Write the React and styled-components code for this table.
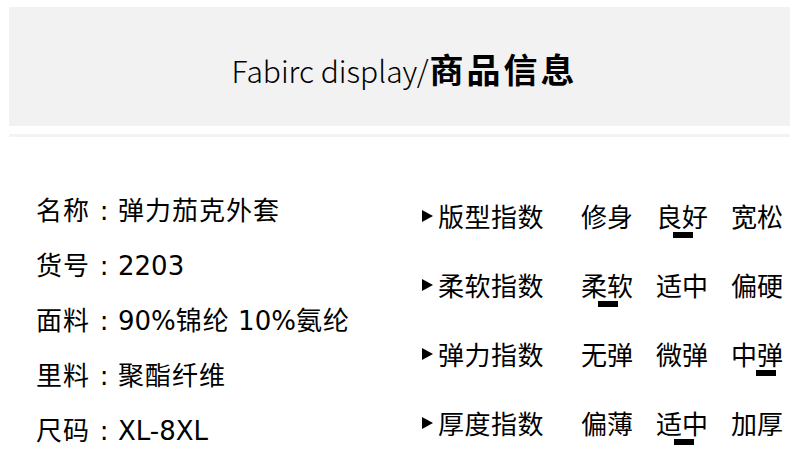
import React from "react";
import styled, { createGlobalStyle } from "styled-components";

const Global = createGlobalStyle`
  html, body { margin: 0; padding: 0; background: #ffffff; }
  body { font-family: "DejaVu Sans", "Noto Sans CJK SC", sans-serif; color: #000; }
`;

const Page = styled.div`
  width: 790px;
  height: 455px;
  overflow: hidden;
  padding-top: 7px;
  box-sizing: border-box;
`;

const Header = styled.header`
  margin-left: 9px;
  height: 119px;
  background: #f2f2f2;
  display: flex;
  align-items: center;
  justify-content: center;
  padding: 4px 0 0 10px;
  box-sizing: border-box;
`;

const Title = styled.h1`
  margin: 0;
  font-size: 30px;
  line-height: 1;
  font-weight: 300;
  font-family: "Noto Sans CJK SC", sans-serif;
  color: #000;
  display: flex;
  align-items: baseline;
`;

const TitleCn = styled.span`
  font-weight: 700;
  font-size: 34px;
  letter-spacing: 3px;
  margin-left: 1px;
`;

const Divider = styled.div`
  margin: 8px 0 0 9px;
  height: 3px;
  background: #f3f3f3;
`;

const Content = styled.section`
  display: flex;
  align-items: flex-start;
`;

const Specs = styled.div`
  width: 422px;
  padding: 47px 0 0 36px;
  box-sizing: border-box;
  display: flex;
  flex-direction: column;
`;

const SpecRow = styled.div`
  height: 55px;
  line-height: 55px;
  font-size: 26px;
  white-space: nowrap;
`;

const Han = styled.span`
  letter-spacing: 1px;
`;

const Colon = styled.span`
  display: inline-block;
  width: 28px;
  text-align: center;
  font-family: "DejaVu Sans", sans-serif;
`;

const Indexes = styled.div`
  flex: 1;
  padding-top: 44px;
  display: flex;
  flex-direction: column;
`;

const IndexRow = styled.div`
  height: 69px;
  display: flex;
  align-items: center;
  font-size: 26px;
  font-family: "Noto Sans CJK SC", sans-serif;
  white-space: nowrap;
`;

const Arrow = styled.span`
  display: inline-block;
  width: 0;
  height: 0;
  border-left: 11px solid #000;
  border-top: 6px solid transparent;
  border-bottom: 6px solid transparent;
  margin-right: 5px;
`;

const IndexLabel = styled.span`
  width: 104px;
  line-height: 30px;
  letter-spacing: 0.5px;
`;

const Options = styled.div`
  display: flex;
  gap: 23px;
  margin-left: 39px;
`;

const Option = styled.span`
  position: relative;
  width: 52px;
  line-height: 30px;
  &::after {
    content: "";
    display: ${(p) => (p.$active ? "block" : "none")};
    position: absolute;
    top: 100%;
    left: 50%;
    width: 20px;
    height: 6px;
    margin-top: 1px;
    background: #000;
    transform: translateX(calc(-50% + ${(p) => p.$shift || 0}px));
  }
`;

const specs = [
  ["名称", "弹力茄克外套"],
  ["货号", "2203"],
  ["面料", "90%锦纶 10%氨纶"],
  ["里料", "聚酯纤维"],
  ["尺码", "XL-8XL"],
];

const indexes = [
  { label: "版型指数", options: ["修身", "良好", "宽松"], active: 1, shift: 1 },
  { label: "柔软指数", options: ["柔软", "适中", "偏硬"], active: 0, shift: 1 },
  { label: "弹力指数", options: ["无弹", "微弹", "中弹"], active: 2, shift: 9 },
  { label: "厚度指数", options: ["偏薄", "适中", "加厚"], active: 1, shift: 2 },
];

const renderText = (s) =>
  s.split(/([\u4e00-\u9fff]+)/).filter(Boolean).map((part, i) =>
    /[\u4e00-\u9fff]/.test(part) ? <Han key={i}>{part}</Han> : <React.Fragment key={i}>{part}</React.Fragment>
  );

export default function App() {
  return (
    <>
      <Global />
      <Page>
        <Header>
          <Title>
            Fabirc display/<TitleCn>商品信息</TitleCn>
          </Title>
        </Header>
        <Divider />
        <Content>
          <Specs>
            {specs.map(([k, v]) => (
              <SpecRow key={k}>
                <Han>{k}</Han>
                <Colon>:</Colon>
                {renderText(v)}
              </SpecRow>
            ))}
          </Specs>
          <Indexes>
            {indexes.map((row) => (
              <IndexRow key={row.label}>
                <Arrow />
                <IndexLabel>{row.label}</IndexLabel>
                <Options>
                  {row.options.map((o, i) => (
                    <Option key={o + i} $active={i === row.active} $shift={row.shift}>
                      {o}
                    </Option>
                  ))}
                </Options>
              </IndexRow>
            ))}
          </Indexes>
        </Content>
      </Page>
    </>
  );
}
